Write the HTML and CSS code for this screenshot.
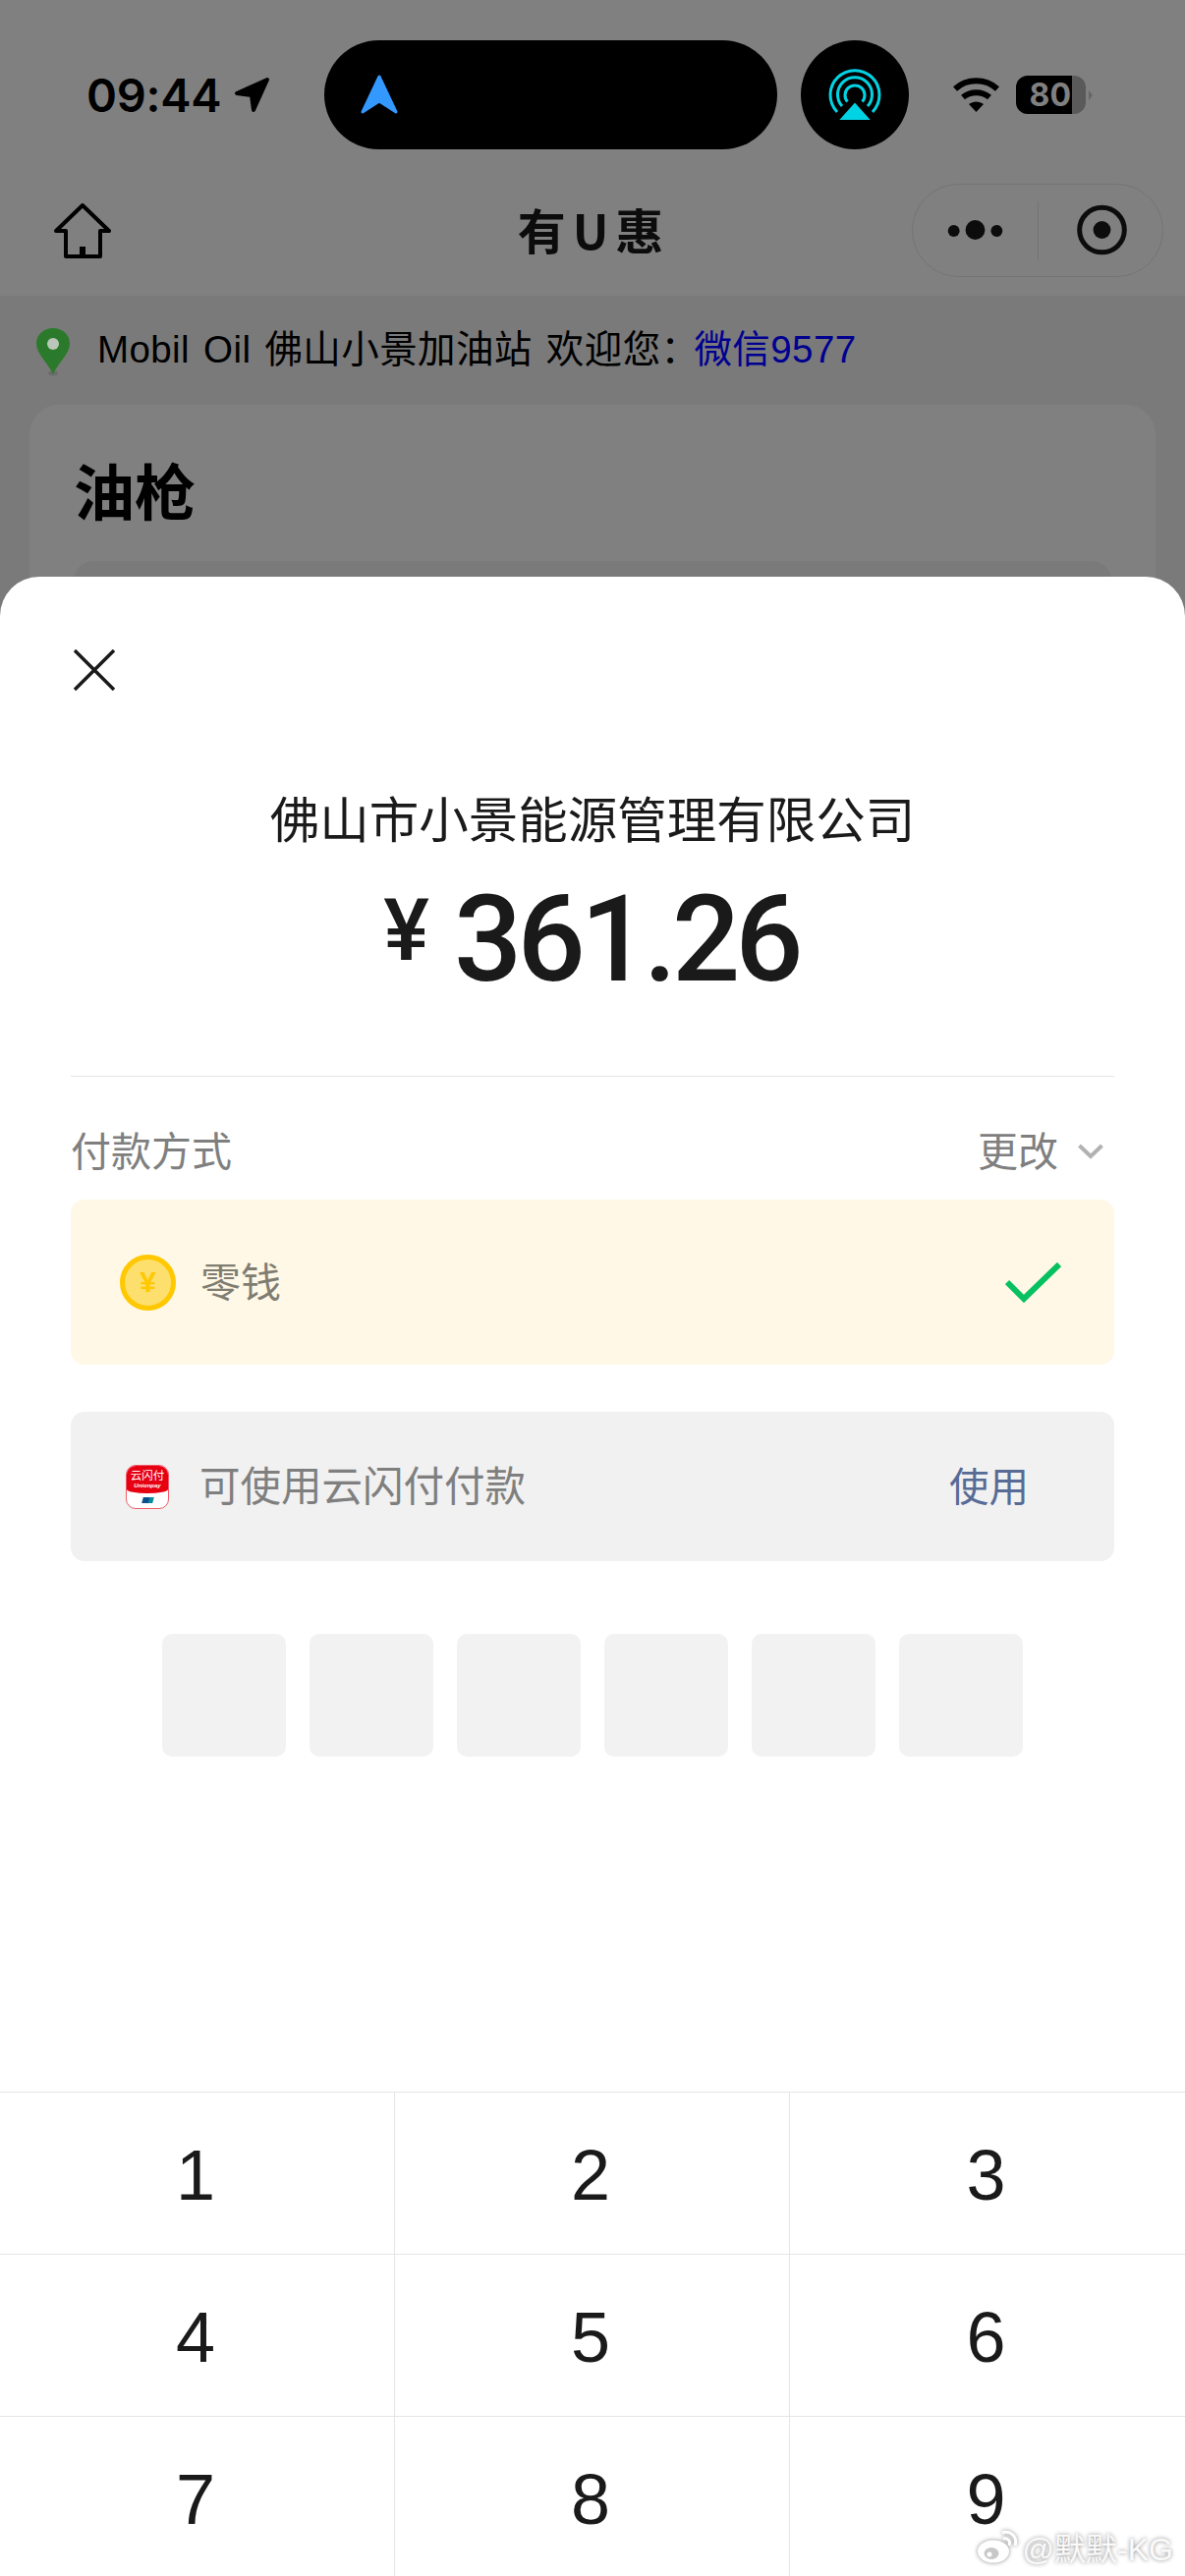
FILE: index.html
```html
<!DOCTYPE html>
<html lang="zh-CN">
<head>
  <meta charset="UTF-8">
  <title>有U惠</title>
  <meta name="viewport" content="width=device-width, initial-scale=1.0">
  <link rel="stylesheet" href="styles.css">
</head>
<body>
<div class="page">

  <div class="top">
    <div class="status">
      <span class="time">09:44</span>
      <svg class="loc" width="37" height="37" viewBox="0 0 37 37"><path d="M34 3 L3 17 L18 19 L20 34 Z" fill="#000" stroke="#000" stroke-width="4" stroke-linejoin="round"/></svg>
      <div class="island">
        <svg width="38" height="41" viewBox="0 0 38 41"><path d="M19 2 L2 38 L19 27 L36 38 Z" fill="#39f" stroke="#39f" stroke-width="3" stroke-linejoin="round"/></svg>
      </div>
      <svg class="airplay" width="110" height="111" viewBox="0 0 110 111">
        <ellipse cx="55" cy="55.5" rx="55" ry="55.5" fill="#000"/>
        <g fill="none" stroke="#00d4e4" stroke-width="3">
          <path d="M37 73 A25 25 0 1 1 73 73"/>
          <path d="M42 67 A17.5 17.5 0 1 1 68 67"/>
          <path d="M47.5 62.5 A10 10 0 1 1 62.5 62.5"/>
        </g>
        <path d="M55 62 L73 82 H37 Z" fill="#00d4e4" stroke="#000" stroke-width="2"/>
      </svg>
      <svg class="wifi" width="47" height="35" viewBox="0 0 47 35">
        <path d="M2 11.5 C14 0.5 33 0.5 45 11.5" fill="none" stroke="#000" stroke-width="6"/>
        <path d="M10 20 C17.5 13.5 29.5 13.5 37 20" fill="none" stroke="#000" stroke-width="6"/>
        <path d="M16 27 C20.5 23.5 26.5 23.5 31 27 L23.5 35 Z" fill="#000"/>
      </svg>
      <div class="battery"><span class="battery-fill">80</span></div>
      <span class="battery-nub"></span>
    </div>

    <div class="nav">
      <svg class="home" width="58" height="56" viewBox="0 0 58 56">
        <path d="M29 2 L56 28 H47 V54 H12 V28 H2 Z" fill="none" stroke="#000" stroke-width="4" stroke-linejoin="round"/>
        <rect x="26" y="44" width="6" height="10" fill="#000"/>
      </svg>
      <div class="nav-title">有U惠</div>
      <div class="capsule">
        <svg width="128" height="60" viewBox="0 0 128 60">
          <circle cx="42" cy="30" r="6" fill="#0c0c0c"/>
          <circle cx="64" cy="29" r="10" fill="#0c0c0c"/>
          <circle cx="86" cy="30" r="6" fill="#0c0c0c"/>
        </svg>
        <span class="capsule-line"></span>
        <svg width="127" height="60" viewBox="0 0 127 60">
          <circle cx="65" cy="29" r="23" fill="none" stroke="#0c0c0c" stroke-width="5"/>
          <circle cx="65" cy="29" r="9" fill="#0c0c0c"/>
        </svg>
      </div>
    </div>
  </div>

  <div class="station">
    <svg class="pin" width="34" height="50" viewBox="0 0 34 50">
      <ellipse cx="17" cy="46" rx="5" ry="2.5" fill="#6c6c6c"/>
      <path d="M17 47 C12 35 0 27 0 15.5 C0 6.5 7.5 0 17 0 C26.5 0 34 6.5 34 15.5 C34 27 22 35 17 47 Z" fill="#2b7a2b"/>
      <circle cx="17" cy="16" r="6" fill="#b9c6b9"/>
    </svg>
    <span class="station-name">Mobil Oil 佛山小景加油站 欢迎您：<span class="station-link">微信9577</span></span>
  </div>

  <div class="card">
    <div class="card-title">油枪</div>
    <div class="card-box"></div>
  </div>

  <div class="sheet">
    <div class="sheet-body">
      <svg class="close" width="42" height="42" viewBox="0 0 42 42"><path d="M1 1 L41 41 M41 1 L1 41" stroke="#1a1a1a" stroke-width="3.5"/></svg>
      <div class="merchant">佛山市小景能源管理有限公司</div>
      <div class="amount">
        <span class="amount-sign">¥</span>
        <span class="amount-num">361.26</span>
      </div>
      <div class="rule"></div>
      <div class="method-head">
        <span class="lift">付款方式</span>
        <div class="method-change">
          <span class="lift">更改</span>
          <svg width="26" height="16" viewBox="0 0 26 16"><path d="M1.5 2 L13 13 L24.5 2" fill="none" stroke="#b2b2b2" stroke-width="4"/></svg>
        </div>
      </div>
      <div class="pay-row pay-selected">
        <span class="coin">¥</span>
        <span class="pay-name lift">零钱</span>
        <svg class="tick" width="57" height="41" viewBox="0 0 57 41"><path d="M2 20 L19 37 L55 2" fill="none" stroke="#07c160" stroke-width="6"/></svg>
      </div>
      <div class="pay-row pay-other">
        <div class="ysf">
          <div class="ysf-top">
            <span class="ysf-name">云闪付</span>
            <span class="ysf-en">Unionpay</span>
          </div>
          <span class="ysf-flag"></span>
        </div>
        <span class="pay-hint lift">可使用云闪付付款</span>
        <span class="pay-use lift">使用</span>
      </div>
      <div class="pins">
        <span class="pin-box"></span>
        <span class="pin-box"></span>
        <span class="pin-box"></span>
        <span class="pin-box"></span>
        <span class="pin-box"></span>
        <span class="pin-box"></span>
      </div>
    </div>

    <div class="keypad">
      <div class="key">1</div>
      <div class="key">2</div>
      <div class="key">3</div>
      <div class="key">4</div>
      <div class="key">5</div>
      <div class="key">6</div>
      <div class="key">7</div>
      <div class="key">8</div>
      <div class="key">9</div>
    </div>
  </div>

  <div class="watermark">
    <svg class="watermark-logo" width="44" height="36" viewBox="0 0 44 36">
      <ellipse cx="17" cy="23" rx="16" ry="11.5" fill="#fff"/>
      <ellipse cx="15" cy="25" rx="7.5" ry="6" fill="#c8c8c8"/>
      <circle cx="13" cy="26" r="2.5" fill="#fff"/>
      <path d="M26 4 C34 1 42 8 39 17" fill="none" stroke="#fff" stroke-width="3"/>
      <path d="M27 10 C31 9 35 12 33 17" fill="none" stroke="#fff" stroke-width="3"/>
    </svg>
    <span>@默默-KG</span>
  </div>

</div>
</body>
</html>
```

FILE: styles.css
```css
* {
  box-sizing: border-box;
}

body {
  margin: 0;
  font-family: "Liberation Sans", "Noto Sans CJK SC", sans-serif;
}

.page {
  position: relative;
  width: 1206px;
  height: 2622px;
  overflow: hidden;
  background-color: #7a7a7a;
}

.top {
  background-color: #808080;
  height: 301px;
}

/* status bar */
.status {
  display: flex;
  align-items: center;
  height: 152px;
  padding: 41px 0 0 88px;
}

.time {
  width: 135px;
  font-family: Inter, sans-serif;
  font-size: 47px;
  font-weight: 600;
  line-height: 1;
  letter-spacing: -0.3px;
  color: #000;
}

.loc {
  margin-left: 15px;
}

.island {
  display: flex;
  align-items: center;
  width: 461px;
  height: 111px;
  margin-left: 55px;
  padding-left: 37px;
  background-color: #000;
  border-radius: 56px;
}

.airplay {
  margin-left: 24px;
}

.wifi {
  margin-left: 45px;
}

.battery {
  width: 71px;
  height: 39px;
  margin-left: 17px;
  background-color: #5a5a5a;
  border-radius: 12px;
  overflow: hidden;
}

.battery-fill {
  display: block;
  width: 57px;
  height: 39px;
  padding-right: 1px;
  background-color: #000;
  color: #808080;
  font-family: Inter, sans-serif;
  font-size: 32px;
  font-weight: 700;
  line-height: 39px;
  text-align: right;
}

.battery-nub {
  width: 0;
  height: 0;
  margin-left: 3px;
  border-left: 4px solid #666;
  border-top: 5px solid transparent;
  border-bottom: 5px solid transparent;
}

/* nav */
.nav {
  display: grid;
  grid-template-columns: 1fr auto 1fr;
  align-items: center;
  padding: 35px 22px 0;
}

.home {
  margin-left: 33px;
}

.nav-title {
  font-family: "Noto Sans CJK SC", sans-serif;
  font-size: 49px;
  font-weight: 700;
  letter-spacing: 7px;
  line-height: 92px;
  padding: 0 0 3px 3px;
  color: #0c0c0c;
}

.capsule {
  justify-self: end;
  display: flex;
  align-items: center;
  width: 256px;
  height: 95px;
  border: 1px solid #747474;
  border-radius: 48px;
}

.capsule-line {
  width: 1px;
  height: 60px;
  background-color: #747474;
}

/* page behind the sheet */
.station {
  display: flex;
  align-items: flex-start;
  gap: 28px;
  padding: 33px 0 0 37px;
  height: 111px;
}

.station-name {
  font-family: "Liberation Sans", "Noto Sans CJK SC", sans-serif;
  font-size: 38.5px;
  letter-spacing: 0.4px;
  word-spacing: 3px;
  line-height: 44px;
  color: #000;
}

.station-link {
  margin-left: -5px;
  color: #000090;
}

.card {
  height: 400px;
  margin: 0 30px;
  padding: 42px 45px 0;
  background-color: #808080;
  border-radius: 30px;
}

.card-title {
  font-family: "Noto Sans CJK SC", sans-serif;
  font-size: 62px;
  font-weight: 700;
  line-height: 88px;
  color: #000;
}

.card-box {
  height: 200px;
  margin-top: 29px;
  background-color: #7a7a7a;
  border-radius: 20px;
}

/* payment sheet */
.sheet {
  position: absolute;
  top: 587px;
  left: 0;
  right: 0;
  bottom: 0;
  overflow: hidden;
  background-color: #fff;
  border-radius: 40px 40px 0 0;
}

.sheet-body {
  padding: 74px 72px 0;
}

.close {
  display: block;
  margin-left: 3px;
}

.merchant {
  margin-top: 98px;
  font-family: "Noto Sans CJK SC", sans-serif;
  font-size: 50.5px;
  line-height: 60px;
  text-align: center;
  color: #1a1a1a;
}

.amount {
  display: flex;
  justify-content: center;
  align-items: flex-start;
  gap: 25px;
  margin-top: 36px;
  padding-right: 3px;
  color: #1a1a1a;
  font-family: Roboto, sans-serif;
  font-weight: 500;
}

.amount-sign {
  font-size: 88px;
  line-height: 100px;
}

.amount-num {
  font-size: 122px;
  line-height: 120px;
  letter-spacing: -5px;
}

.rule {
  height: 1px;
  margin-top: 78px;
  background-color: #e5e5e5;
}

.method-head {
  display: flex;
  justify-content: space-between;
  align-items: center;
  height: 64px;
  margin-top: 44px;
  padding-right: 11px;
  font-family: "Noto Sans CJK SC", sans-serif;
  font-size: 41px;
  color: #7f7f7f;
}

.method-change {
  display: flex;
  align-items: center;
  gap: 20px;
}

/* Noto sits a little lower than the original's font */
.lift {
  margin-top: -6px;
}

.pay-row {
  display: flex;
  align-items: center;
  border-radius: 14px;
  font-family: "Noto Sans CJK SC", sans-serif;
  font-size: 40px;
}

.pay-selected {
  height: 168px;
  margin-top: 17px;
  padding: 0 54px 0 50px;
  background-color: #fff8e6;
}

.coin {
  display: flex;
  justify-content: center;
  align-items: center;
  width: 57px;
  height: 57px;
  border: 5px solid #ffc800;
  border-radius: 50%;
  background-color: #fddf6d;
  color: #ffc800;
  font-family: "Liberation Sans", sans-serif;
  font-size: 30px;
  font-weight: 700;
}

.pay-name {
  margin-left: 25px;
  font-size: 41px;
  color: #7f7d72;
}

.tick {
  margin-left: auto;
}

.pay-other {
  height: 152px;
  margin-top: 48px;
  padding: 0 87px 0 56px;
  background-color: #f1f1f1;
}

.ysf {
  display: flex;
  flex-direction: column;
  align-items: center;
  width: 44px;
  height: 45px;
  overflow: hidden;
  background-color: #fff;
  border: 1.5px solid #ef5a68;
  border-radius: 10px;
}

.ysf-top {
  display: flex;
  flex-direction: column;
  align-items: center;
  width: 100%;
  height: 28px;
  background-color: #e60012;
  border-radius: 0 0 50% 50% / 0 0 4px 4px;
  color: #fff;
}

.ysf-name {
  font-size: 11.5px;
  line-height: 15px;
  margin-top: 2px;
}

.ysf-en {
  font-family: "Liberation Sans", sans-serif;
  font-size: 6px;
  font-weight: 700;
  font-style: italic;
  line-height: 7px;
}

.ysf-flag {
  width: 11px;
  height: 6px;
  margin-top: 4px;
  background: linear-gradient(90deg, #0a4f8c 0 60%, #0a8a9a 60%);
  transform: skewX(-15deg);
}

.pay-hint {
  margin-left: 31px;
  font-size: 41.5px;
  color: #7f7f7f;
}

.pay-use {
  margin-left: auto;
  font-size: 40.5px;
  color: #576b95;
}

.pins {
  display: flex;
  justify-content: center;
  gap: 24px;
  margin-top: 74px;
}

.pin-box {
  width: 126px;
  height: 125px;
  background-color: #f2f2f2;
  border-radius: 10px;
}

/* keypad, last row runs off the screen */
.keypad {
  display: grid;
  grid-template-columns: repeat(3, 402px);
  grid-auto-rows: 165px;
  margin-top: 341px;
}

.key {
  display: flex;
  justify-content: center;
  align-items: center;
  padding: 3px 3px 0 0;
  border-top: 1px solid #e5e5e5;
  border-right: 1px solid #e5e5e5;
  font-size: 72px;
  color: #1a1a1a;
}

.key:nth-child(3n) {
  border-right: none;
}

.watermark {
  position: absolute;
  right: 12px;
  bottom: 7px;
  display: flex;
  align-items: center;
  gap: 3px;
  font-size: 32px;
  color: #fafafa;
  text-shadow: 0 0 4px #8a8a8a;
}

.watermark-logo {
  filter: drop-shadow(0 0 2px #8a8a8a);
}
```
